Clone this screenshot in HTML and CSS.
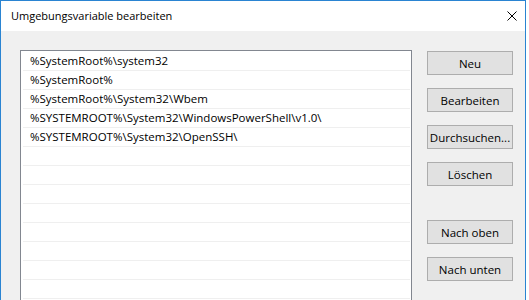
FILE: index.html
```html
<!DOCTYPE html>
<html lang="de">
<head>
  <meta charset="UTF-8">
  <title>Umgebungsvariable bearbeiten</title>
  <link rel="stylesheet" href="styles.css">
</head>
<body>
<div class="dialog">
  <div class="titlebar">
    <span class="title">Umgebungsvariable bearbeiten</span>
    <span class="close">
      <svg width="10" height="10" viewBox="0 0 10 10"><path d="M0.5 0.5L9.5 9.5M9.5 0.5L0.5 9.5" stroke="#000" stroke-width="1" fill="none"/></svg>
    </span>
  </div>
  <div class="content">
    <ul class="list">
      <li>%SystemRoot%\system32</li>
      <li>%SystemRoot%</li>
      <li>%SystemRoot%\System32\Wbem</li>
      <li>%SYSTEMROOT%\System32\WindowsPowerShell\v1.0\</li>
      <li>%SYSTEMROOT%\System32\OpenSSH\</li>
      <li></li>
      <li></li>
      <li></li>
      <li></li>
      <li></li>
      <li></li>
      <li></li>
      <li></li>
      <li></li>
    </ul>
    <div class="buttons">
      <button class="btn">Neu</button>
      <button class="btn">Bearbeiten</button>
      <button class="btn">Durchsuchen...</button>
      <button class="btn">Löschen</button>
      <button class="btn btn-gap">Nach oben</button>
      <button class="btn">Nach unten</button>
    </div>
  </div>
</div>
</body>
</html>
```
FILE: styles.css
```css
* {
  margin: 0;
  padding: 0;
  box-sizing: border-box;
}

ul {
  list-style: none;
}

body {
  background-color: #fff;
  overflow: hidden;
  font-family: "Open Sans", "Noto Sans", sans-serif;
  font-size: 11.5px;
  color: #000;
}

.dialog {
  width: 526px;
  height: 300px;
  border: 1px solid #2a84d2;
  border-bottom: 0;
  background-color: #f0f0f0;
  overflow: hidden;
}

/* Titelleiste */
.titlebar {
  height: 30px;
  background-color: #fff;
  display: flex;
  align-items: center;
  justify-content: space-between;
  padding-left: 10px;
}

.title {
  font-size: 11px;
  line-height: 30px;
}

.close {
  width: 26px;
  height: 30px;
  display: flex;
  align-items: center;
  justify-content: center;
}

.close svg {
  display: block;
}

/* Inhalt */
.content {
  display: flex;
  align-items: flex-start;
  padding: 19px 0 0 19px;
}

.list {
  width: 392px;
  height: 250px;
  border: 1px solid #828790;
  border-bottom: 0;
  background-color: #fff;
  padding: 1px 1px 0 1px;
  overflow: hidden;
}

.list li {
  height: 19px;
  line-height: 18px;
  border-bottom: 1px solid #efefef;
  padding-left: 7px;
  margin-left: 1px;
  white-space: nowrap;
}

.buttons {
  display: flex;
  flex-direction: column;
  gap: 13px;
  margin: 1px 0 0 15px;
}

.btn {
  width: 86px;
  height: 24px;
  background-color: #e1e1e1;
  border: 1px solid #adadad;
  font-family: inherit;
  font-size: 11.5px;
  color: #000;
  padding: 0;
  white-space: nowrap;
}

.btn-gap {
  margin-top: 21px;
}
```
